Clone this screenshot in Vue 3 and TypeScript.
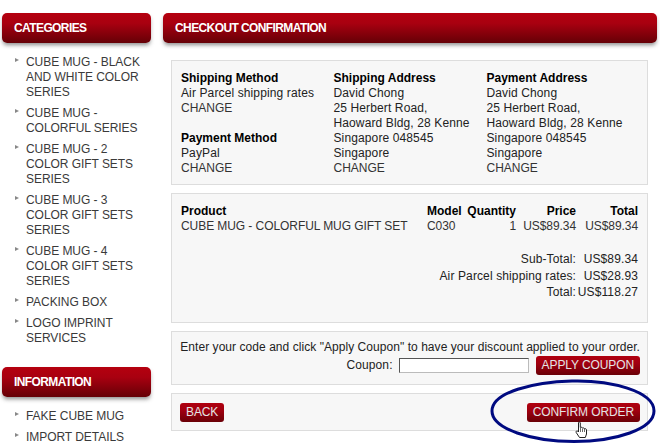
<script setup lang="ts">
const categories: string[] = [
  'CUBE MUG - BLACK AND WHITE COLOR SERIES',
  'CUBE MUG - COLORFUL SERIES',
  'CUBE MUG - 2 COLOR GIFT SETS SERIES',
  'CUBE MUG - 3 COLOR GIFT SETS SERIES',
  'CUBE MUG - 4 COLOR GIFT SETS SERIES',
  'PACKING BOX',
  'LOGO IMPRINT SERVICES',
]
const information: string[] = ['FAKE CUBE MUG', 'IMPORT DETAILS']
const address: string[] = ['David Chong', '25 Herbert Road,', 'Haoward Bldg, 28 Kenne', 'Singapore 048545', 'Singapore']
</script>

<template>
  <div class="page">
    <aside class="side">
      <h2 class="bar">CATEGORIES</h2>
      <ul class="list">
        <li v-for="c in categories" :key="c">{{ c }}</li>
      </ul>
      <h2 class="bar info">INFORMATION</h2>
      <ul class="list">
        <li v-for="c in information" :key="c">{{ c }}</li>
      </ul>
    </aside>
    <main class="main">
      <h1 class="bar">CHECKOUT CONFIRMATION</h1>
      <section class="box details">
        <div class="col">
          <b>Shipping Method</b>
          <span>Air Parcel shipping rates</span>
          <a>CHANGE</a>
          <b class="second">Payment Method</b>
          <span>PayPal</span>
          <a>CHANGE</a>
        </div>
        <div class="col">
          <b>Shipping Address</b>
          <span v-for="l in address" :key="l">{{ l }}</span>
          <a>CHANGE</a>
        </div>
        <div class="col">
          <b>Payment Address</b>
          <span v-for="l in address" :key="l">{{ l }}</span>
          <a>CHANGE</a>
        </div>
      </section>
      <section class="box order">
        <div class="rows">
          <b>Product</b><b>Model</b><b class="r">Quantity</b><b class="r">Price</b><b class="r">Total</b>
          <a>CUBE MUG - COLORFUL MUG GIFT SET</a><a>C030</a><a class="r">1</a><a class="r">US$89.34</a><a class="r">US$89.34</a>
        </div>
        <div class="totals">
          <span>Sub-Total:</span><span>US$89.34</span>
          <span>Air Parcel shipping rates:</span><span>US$28.93</span>
          <span>Total:</span><span>US$118.27</span>
        </div>
      </section>
      <section class="box coupon">
        <p>Enter your code and click "Apply Coupon" to have your discount applied to your order.</p>
        <div class="coupon-row">
          <label for="coupon">Coupon:</label>
          <input id="coupon" type="text" />
          <button class="btn" type="button">APPLY COUPON</button>
        </div>
      </section>
      <section class="box actions">
        <button class="btn" type="button">BACK</button>
        <button class="btn" type="button">CONFIRM ORDER</button>
      </section>
      <svg class="ring" width="170" height="66" viewBox="0 0 170 66" aria-hidden="true">
        <path d="M84 3 C122 2 166 13 166 33 C166 51 128 63.5 86 63.5 C44 63.5 4 51 4 33 C4 14 46 4 84 3 Z" fill="none" stroke="#000a80" stroke-width="3" />
      </svg>
      <svg class="hand" width="13" height="18" viewBox="0 0 13 18" aria-hidden="true">
        <path d="M3.5 1.5 C4.2.6 5.3 1 5.3 2 L5.3 6.5 C6 6 7 6.2 7.3 7 C8 6.6 9 6.8 9.3 7.7 C10.2 7.4 11.5 7.8 11.5 9 L11.5 13 L10.3 16.5 L4.5 16.5 L1.2 11.5 C.6 10.4 1.8 9.3 2.8 10.2 L3.5 11 Z" fill="#fff" stroke="#222" stroke-width="1" stroke-linejoin="round" />
        <path d="M5.5 7v4M7.5 7.5V11M9.5 8v3" stroke="#444" stroke-width=".8" fill="none" />
      </svg>
    </main>
  </div>
</template>

<style>
html, body { margin: 0; background: #fff; overflow: hidden; }
</style>

<style scoped>
.page {
  width: 660px;
  height: 443px;
  overflow: hidden;
  box-sizing: border-box;
  padding: 13px 3px 0 2px;
  display: flex;
  gap: 12px;
  font: 12px/15px "Liberation Sans", Arial, sans-serif;
  letter-spacing: 0.12px;
  color: #333;
}
.side { width: 149px; flex: none; }
.main { flex: 1; position: relative; min-width: 0; }
.bar {
  margin: 0;
  height: 30px;
  box-sizing: border-box;
  padding-left: 12px;
  border-radius: 5px;
  background: linear-gradient(#b5000f, #a80010 35%, #650006);
  box-shadow: 0 3px 4px -1px rgba(60, 60, 60, 0.6);
  color: #fff;
  font-size: 12px;
  font-weight: bold;
  line-height: 31px;
  letter-spacing: -0.6px;
}
.info { margin-top: 21px; }
.list {
  list-style: none;
  margin: 12px 0 0;
  padding: 0 0 0 24px;
  display: flex;
  flex-direction: column;
  gap: 6px;
  letter-spacing: -0.05px;
  color: #3a3a3a;
}
.list li { position: relative; }
.list li::before {
  content: "";
  position: absolute;
  left: -11px;
  top: 3px;
  width: 0;
  height: 0;
  border-left: 4px solid #888;
  border-top: 2.5px solid transparent;
  border-bottom: 2.5px solid transparent;
}
.box {
  margin: 0 9px 0 8px;
  background: #f7f7f7;
  border: 1px solid #ddd;
  box-sizing: border-box;
  color: #222;
}
b { color: #000; letter-spacing: 0; }
a { color: #333; letter-spacing: 0; }
.details {
  margin-top: 17px;
  height: 125px;
  padding: 10px 9px;
  display: grid;
  grid-template-columns: 152.5px 153px 1fr;
}
.col { display: flex; flex-direction: column; }
.second { margin-top: 15px; }
.order { margin-top: 8px; height: 130px; padding: 10px 9px; }
.rows {
  display: grid;
  grid-template-columns: 246px 40px 49px 60px 1fr;
}
.rows a { letter-spacing: -0.07px; }
.r { text-align: right; }
.rows a:first-of-type { white-space: nowrap; }
.totals {
  margin-top: 17px;
  display: grid;
  grid-template-columns: 1fr 62px;
  text-align: right;
  line-height: 16.5px;
}
.coupon { margin-top: 8px; height: 54px; padding: 8px 7px 0 8px; text-align: right; }
.coupon p { margin: 0; white-space: nowrap; letter-spacing: 0.05px; }
.coupon-row {
  margin-top: 1px;
  display: flex;
  justify-content: flex-end;
  align-items: center;
  gap: 6px;
}
input {
  width: 130px;
  height: 15px;
  padding: 0;
  box-sizing: border-box;
  border: 1px solid #bbb;
  border-top-color: #555;
  border-left-color: #555;
  background: #fff;
  margin-right: 1px;
}
.btn {
  border: none;
  border-radius: 3px;
  background: linear-gradient(#b0000f, #a00010 40%, #6a0007);
  color: #e4e4e4;
  font: 12px/15px "Liberation Sans", Arial, sans-serif;
  letter-spacing: -0.1px;
  height: 19px;
  padding: 0 6px;
}
.actions {
  margin-top: 8px;
  height: 38px;
  padding: 0 7px 0 8px;
  display: flex;
  justify-content: space-between;
  align-items: center;
}
.ring { position: absolute; left: 325px; top: 365px; }
.hand { position: absolute; left: 412px; top: 408px; }
</style>
